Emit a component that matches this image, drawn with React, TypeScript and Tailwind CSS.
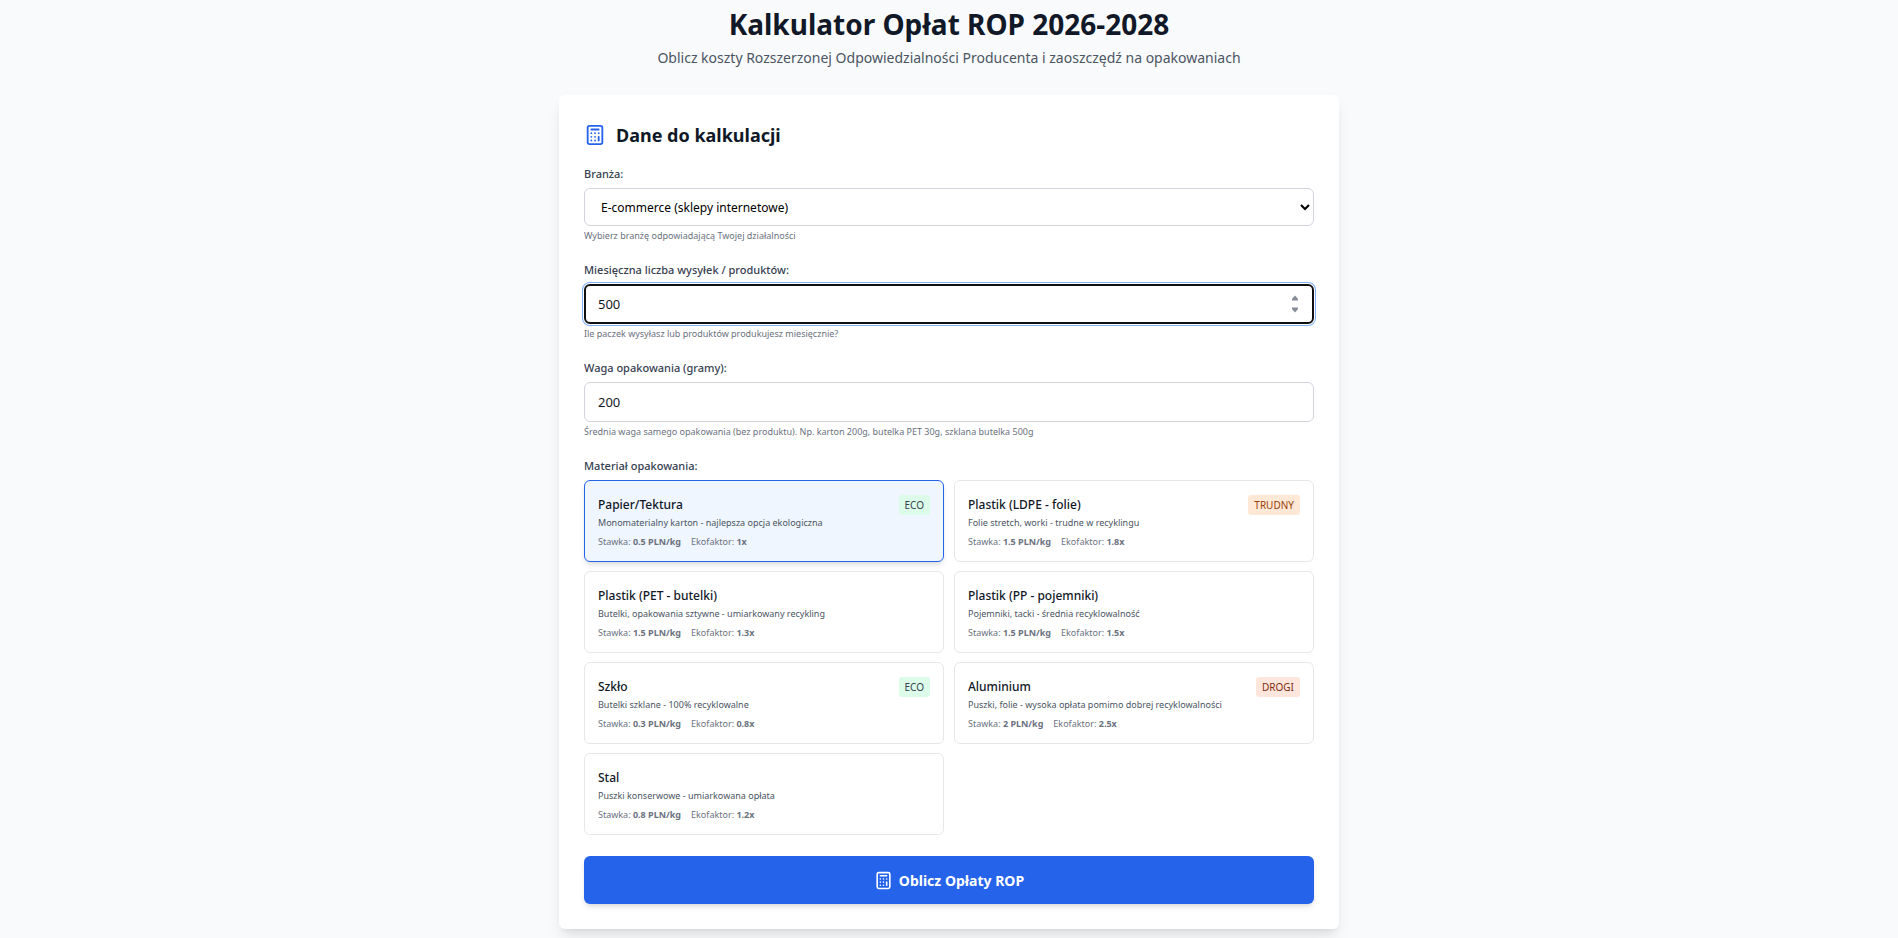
import { useState } from "react";
import type { ReactNode } from "react";
import { Calculator } from "lucide-react";

type Material = {
	id: string;
	name: string;
	description: string;
	rate: number;
	ecoFactor: number;
	badge?: "ECO" | "TRUDNY" | "DROGI";
};

const MATERIALS: Material[] = [
	{
		id: "paper",
		name: "Papier/Tektura",
		description: "Monomaterialny karton - najlepsza opcja ekologiczna",
		rate: 0.5,
		ecoFactor: 1,
		badge: "ECO",
	},
	{
		id: "ldpe",
		name: "Plastik (LDPE - folie)",
		description: "Folie stretch, worki - trudne w recyklingu",
		rate: 1.5,
		ecoFactor: 1.8,
		badge: "TRUDNY",
	},
	{
		id: "pet",
		name: "Plastik (PET - butelki)",
		description: "Butelki, opakowania sztywne - umiarkowany recykling",
		rate: 1.5,
		ecoFactor: 1.3,
	},
	{
		id: "pp",
		name: "Plastik (PP - pojemniki)",
		description: "Pojemniki, tacki - średnia recyklowalność",
		rate: 1.5,
		ecoFactor: 1.5,
	},
	{
		id: "glass",
		name: "Szkło",
		description: "Butelki szklane - 100% recyklowalne",
		rate: 0.3,
		ecoFactor: 0.8,
		badge: "ECO",
	},
	{
		id: "aluminium",
		name: "Aluminium",
		description: "Puszki, folie - wysoka opłata pomimo dobrej recyklowalności",
		rate: 2,
		ecoFactor: 2.5,
		badge: "DROGI",
	},
	{
		id: "steel",
		name: "Stal",
		description: "Puszki konserwowe - umiarkowana opłata",
		rate: 0.8,
		ecoFactor: 1.2,
	},
];

const BADGE_STYLES = {
	ECO: "bg-[#dcfce9] text-[#374151]",
	TRUDNY: "bg-[#ffe8d5] text-[#9a3f0c]",
	DROGI: "bg-[#fee6dc] text-[#7c2d12]",
};

const LABEL = "block text-[11px] leading-4 font-medium text-[#374151]";
const INPUT = "block h-10 w-full rounded-md bg-white text-[13px] text-[#111827]";

function Field({
	id,
	label,
	hint,
	children,
}: {
	id: string;
	label: string;
	hint: string;
	children: ReactNode;
}) {
	return (
		<div>
			<label htmlFor={id} className={LABEL}>
				{label}
			</label>
			<div className="mt-1.5">{children}</div>
			<p className="mt-0.5 text-[9px] leading-4 text-[#6b7280]">{hint}</p>
		</div>
	);
}

function MaterialCard({
	material,
	selected,
	onSelect,
}: {
	material: Material;
	selected: boolean;
	onSelect: () => void;
}) {
	return (
		<button
			type="button"
			aria-pressed={selected}
			onClick={onSelect}
			className={`rounded-md border px-[13px] py-3 text-left ${
				selected ? "border-[#2563eb] bg-[#eff6ff] shadow-md" : "border-[#e5e7eb] bg-white"
			}`}
		>
			<div className="flex h-[22px] items-start justify-between">
				<h3 className="text-[12px] leading-6 font-medium text-[#111827]">{material.name}</h3>
				{material.badge && (
					<span
						className={`mt-0.5 rounded-[3px] px-1.5 py-0.5 text-[10px] leading-4 ${BADGE_STYLES[material.badge]}`}
					>
						{material.badge}
					</span>
				)}
			</div>
			<p className="text-[9px] leading-4 text-[#4b5563]">{material.description}</p>
			<div className="mt-[3px] flex gap-2.5 text-[9px] leading-[15px] text-[#6b7280]">
				<span>
					Stawka: <strong>{material.rate} PLN/kg</strong>
				</span>
				<span>
					Ekofaktor: <strong>{material.ecoFactor}x</strong>
				</span>
			</div>
		</button>
	);
}

export default function App() {
	const [industry, setIndustry] = useState("ecommerce");
	const [shipments, setShipments] = useState("500");
	const [weight, setWeight] = useState("200");
	const [materialId, setMaterialId] = useState("paper");

	return (
		<div className="min-h-screen bg-[#f9fafc] pt-1.5 pb-2 font-['Noto_Sans',sans-serif]">
			<main className="mx-auto max-w-[780px]">
				<header className="text-center">
					<h1 className="text-[28px] leading-9 font-bold text-[#111827]">
						Kalkulator Opłat ROP 2026-2028
					</h1>
					<p className="mt-1 text-[14px] leading-6 text-[#4b5563]">
						Oblicz koszty Rozszerzonej Odpowiedzialności Producenta i zaoszczędź na opakowaniach
					</p>
				</header>

				<section className="mt-[25px] rounded-md bg-white px-[25px] pt-[26px] pb-[25px] shadow-lg">
					<h2 className="flex items-center gap-2.5 text-[18px] leading-7 font-bold text-[#111827]">
						<Calculator size={22} className="text-[#2563eb]" />
						Dane do kalkulacji
					</h2>

					<form className="mt-[17px]" onSubmit={(e) => e.preventDefault()}>
						<div className="flex flex-col gap-[18px]">
							<Field id="industry" label="Branża:" hint="Wybierz branżę odpowiadającą Twojej działalności">
								<select
									id="industry"
									value={industry}
									onChange={(e) => setIndustry(e.target.value)}
									className="block h-[38px] w-full rounded-md border border-[#d1d5db] bg-white px-3 text-[12px] text-black"
								>
									<option value="ecommerce">E-commerce (sklepy internetowe)</option>
								</select>
							</Field>

							<Field
								id="shipments"
								label="Miesięczna liczba wysyłek / produktów:"
								hint="Ile paczek wysyłasz lub produktów produkujesz miesięcznie?"
							>
								<div className="relative">
									<input
										id="shipments"
										type="number"
										value={shipments}
										onChange={(e) => setShipments(e.target.value)}
										className={`${INPUT} border-2 border-[#101010] px-3 ring-1 ring-[#7eb0fb] ring-offset-1 outline-none [&::-webkit-inner-spin-button]:opacity-0`}
									/>
									{/* arrows sit over the native spin button, which still takes the clicks */}
									<svg
										viewBox="0 0 8 18"
										className="pointer-events-none absolute top-[11px] right-[15px] h-[18px] w-2 fill-[#858b98]"
										aria-hidden="true"
									>
										<path d="M4 0.5 7 4v1.5H1V4z" />
										<path d="M4 17.5 7 14v-1.500H1V14z" />
									</svg>
								</div>
							</Field>

							<Field
								id="weight"
								label="Waga opakowania (gramy):"
								hint="Średnia waga samego opakowania (bez produktu). Np. karton 200g, butelka PET 30g, szklana butelka 500g"
							>
								<input
									id="weight"
									type="number"
									value={weight}
									onChange={(e) => setWeight(e.target.value)}
									className={`${INPUT} border border-[#d1d5db] px-[13px]`}
								/>
							</Field>

							<fieldset>
								<legend className={LABEL}>Materiał opakowania:</legend>
								<div className="mt-1.5 grid grid-cols-2 gap-x-2.5 gap-y-[9px]">
									{MATERIALS.map((m) => (
										<MaterialCard
											key={m.id}
											material={m}
											selected={m.id === materialId}
											onSelect={() => setMaterialId(m.id)}
										/>
									))}
								</div>
							</fieldset>
						</div>

						<button
							type="submit"
							className="mt-[21px] flex h-12 w-full items-center justify-center gap-1.5 rounded-md bg-[#2563eb] text-[14px] font-bold text-white shadow-md"
						>
							<Calculator size={19} />
							Oblicz Opłaty ROP
						</button>
					</form>
				</section>
			</main>
		</div>
	);
}
